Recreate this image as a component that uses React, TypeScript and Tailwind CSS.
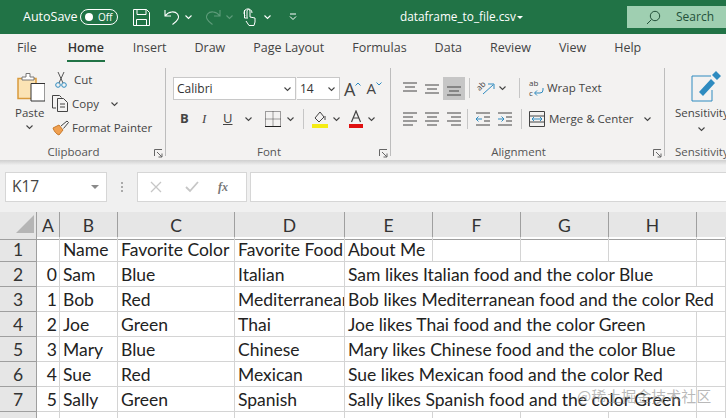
import React from "react";

const UI = "font-['Open_Sans','Noto_Sans',sans-serif]";
const SHEET = "font-['Lato','Noto_Sans',sans-serif]";

function Chev({ c = "#444", className = "" }: { c?: string; className?: string }) {
  return (
    <svg width="9" height="6" viewBox="0 0 9 6" className={`shrink-0 ${className}`}>
      <path d="M1.5 1.5 4.5 4.5 7.5 1.5" fill="none" stroke={c} strokeWidth="1.1" />
    </svg>
  );
}

function Launcher() {
  return (
    <svg width="9" height="9" viewBox="0 0 9 9" className="shrink-0">
      <path d="M.5 7V.5H8M3 3l5 5M8 4.500V8H4.500" fill="none" stroke="#666" strokeWidth="1" />
    </svg>
  );
}

function Lines({ w, y, x = [] as number[] }: { w: number[]; y: number[]; x?: number[] }) {
  return (
    <svg width="16" height="16" viewBox="0 0 16 16" className="shrink-0">
      {y.map((yy, i) => (
        <path key={i} d={`M${x[i] ?? 1} ${yy}h${w[i]}`} stroke="#444" strokeWidth="1" />
      ))}
    </svg>
  );
}

function TitleBar() {
  return (
    <div className={`h-[34px] bg-[#217346] text-white flex items-center pl-[23px] text-[12.5px] ${UI}`}>
      <span className="w-[57px]">AutoSave</span>
      <div className="w-[38px] h-[16px] rounded-full border border-white flex items-center pl-[4px] gap-[5px] text-[10px]">
        <span className="w-[8px] h-[8px] rounded-full bg-white" />
        Off
      </div>
      <svg width="17" height="17" viewBox="0 0 17 17" className="ml-[15px]">
        <path d="M.5.5h13l3 3v13H.5zM4 .5v5h9v-5M3.500 16.500v-6h10v6" fill="none" stroke="#fff" />
      </svg>
      <svg width="16" height="17" viewBox="0 0 16 17" className="ml-[14px]">
        <path d="M1 1v6h6M1.500 6.500C5 2 11 2 13.500 5c2.500 3.500 0 7-5 10.500" fill="none" stroke="#fff" strokeWidth="1.1" />
      </svg>
      <Chev c="#fff" className="ml-[4px]" />
      <svg width="16" height="17" viewBox="0 0 16 17" className="ml-[12px]">
        <path d="M15 1v6H9M14.500 6.500C11 2 5 2 2.500 5c-2.500 3.500 0 7 5 10.500" fill="none" stroke="#5f9c7b" strokeWidth="1.1" />
      </svg>
      <Chev c="#5f9c7b" className="ml-[4px]" />
      <svg width="14" height="18" viewBox="0 0 14 18" className="ml-[9px]">
        <path d="M4 9.500V3a1.500 1.500 0 0 1 3 0v6l5 1v4l-1 3.500H6L3 13M2 7.500a4 4 0 1 1 7-2.500M5 10H1.500V2" fill="none" stroke="#fff" />
      </svg>
      <Chev c="#fff" className="ml-[6px]" />
      <svg width="8" height="8" viewBox="0 0 8 8" className="ml-[17px]">
        <path d="M1 1h6M1 3.500 4 6.500 7 3.500" fill="none" stroke="#fff" />
      </svg>
      <span className="ml-[103px] w-[111px] text-[11.8px] whitespace-nowrap">dataframe_to_file.csv</span>
      <span className="ml-[6px] border-x-[3px] border-t-[3px] border-x-transparent border-t-white" />
      <div className="ml-auto w-[99px] h-[22px] bg-[#9fcfb1] text-[#24513a] flex items-center pl-[19px] gap-[15px] text-[12px]">
        <svg width="15" height="15" viewBox="0 0 15 15">
          <circle cx="9" cy="6" r="4.700" fill="none" stroke="#24513a" />
          <path d="M5.500 9.500 1 14" stroke="#24513a" />
        </svg>
        Search
      </div>
    </div>
  );
}

function Tabs() {
  return (
    <div className={`h-[28px] flex items-center pl-[17px] gap-[28px] text-[12.5px] text-[#444] ${UI}`}>
      <span>File</span>
      <span className="ml-[2px] h-full flex flex-col items-center pt-[5px] font-semibold text-[#333]">
        Home
        <span className="w-[38px] h-[3px] bg-[#217346] mt-[2px]" />
      </span>
      <span>Insert</span>
      <span>Draw</span>
      <span>Page Layout</span>
      <span>Formulas</span>
      <span>Data</span>
      <span>Review</span>
      <span>View</span>
      <span>Help</span>
    </div>
  );
}

function Group({ width, label, children }: { width: number; label: string; children: React.ReactNode }) {
  return (
    <div className="h-[88px] mt-[6px] flex flex-col border-r border-[#bdbdbd] shrink-0" style={{ width }}>
      <div className="flex-1 min-h-0 flex">{children}</div>
      <div className="h-[9px] flex items-center relative text-[11.5px] text-[#555] pr-[18px]">
        <span className="flex-1 text-center">{label}</span>
        <span className="absolute right-[2px] top-[2px]"><Launcher /></span>
      </div>
    </div>
  );
}

function Clipboard() {
  return (
    <Group width={166} label="Clipboard">
      <div className="w-[52px] pl-[15px] flex flex-col items-start pt-[3px]">
        <svg width="30" height="32" viewBox="0 0 30 32">
          <path d="M3 7.500h18v20H3z" fill="#fbe3b4" stroke="#d99a3c" strokeWidth="1.500" />
          <path d="M11 6V2.500h4V6h4v3H7V6z" fill="#fff" stroke="#777" />
          <path d="M16 12.500h14v17.500H16z" fill="#fff" stroke="#333" />
        </svg>
        <span className="text-[11.500px] text-[#444] mt-[1px]">Paste</span>
        <Chev className="ml-[10px] mt-[3px]" />
      </div>
      <div className="flex flex-col gap-[5px] pt-[2px] text-[11.500px] text-[#444]">
        <div className="h-[19px] flex items-center gap-[7px] pl-[3px]">
          <svg width="12" height="17" viewBox="0 0 12 17">
            <path d="M3 1l5 11M9 1 4 12" stroke="#555" fill="none" />
            <circle cx="3" cy="14" r="2.300" fill="none" stroke="#2e8bc0" />
            <circle cx="9" cy="14" r="2.300" fill="none" stroke="#2e8bc0" />
          </svg>
          Cut
        </div>
        <div className="h-[19px] flex items-center gap-[3px]">
          <svg width="17" height="17" viewBox="0 0 17 17">
            <path d="M4 13H.5V.5h7l2 2M5.500 3.500h6l4 4v9h-10zM8 9h5M8 12h5" fill="none" stroke="#444" />
          </svg>
          Copy
          <Chev className="ml-[8px]" />
        </div>
        <div className="h-[19px] flex items-center gap-[3px] whitespace-nowrap">
          <svg width="17" height="16" viewBox="0 0 17 16">
            <path d="M1 8l6-3 4 5-4 5c-3-1-5-4-6-7z" fill="#f0a050" stroke="#c87a2c" />
            <path d="M9 6l6-5 1.500 1.500-5 6" fill="none" stroke="#444" />
          </svg>
          Format Painter
        </div>
      </div>
    </Group>
  );
}

function Font() {
  return (
    <Group width={225} label="Font">
      <div className="pl-[7px] pt-[9px]">
        <div className="flex items-center">
          <div className="w-[123px] h-[23px] bg-white border border-[#c8c8c8] flex items-center px-[3px] text-[12px] text-[#333]">
            <span className="flex-1">Calibri</span>
            <Chev />
          </div>
          <div className="w-[43px] h-[23px] bg-white border border-l-0 border-[#c8c8c8] flex items-center px-[3px] ml-[1px] text-[12px] text-[#333]">
            <span className="flex-1">14</span>
            <Chev />
          </div>
          <span className="ml-[4px] text-[18px] text-[#444] leading-none">A</span>
          <svg width="6" height="4" viewBox="0 0 6 4" className="mb-[10px]"><path d="M.5 3.500 3 1l2.500 2.500" fill="none" stroke="#2e8bc0" /></svg>
          <span className="ml-[5px] text-[15px] text-[#444] leading-none">A</span>
          <svg width="6" height="4" viewBox="0 0 6 4" className="mb-[10px]"><path d="M.5.500 3 3 5.500.500" fill="none" stroke="#2e8bc0" /></svg>
        </div>
        <div className="flex items-center mt-[8px] h-[22px] text-[#444]">
          <span className="ml-[7px] w-[22px] font-bold text-[13px]">B</span>
          <span className="w-[21px] italic text-[13px] font-['Liberation_Serif',serif]">I</span>
          <span className="w-[17px] underline text-[13px]">U</span>
          <Chev className="ml-[4px]" />
          <svg width="16" height="16" viewBox="0 0 16 16" className="ml-[12px]">
            <path d="M.5.500h15v15H.5zM8 .5v15M.5 8h15" fill="none" stroke="#444" strokeDasharray="1 1" />
            <path d="M0 15.500h16" stroke="#222" />
          </svg>
          <Chev className="ml-[5px]" />
          <span className="ml-[8px] w-px h-[20px] bg-[#c6c6c6]" />
          <svg width="16" height="18" viewBox="0 0 16 18" className="ml-[8px]">
            <path d="M3 8l5-6 4 5-5 5zM13 6v4" fill="none" stroke="#444" />
            <path d="M0 14h16v4H0z" fill="#f5ec14" />
          </svg>
          <Chev className="ml-[4px]" />
          <svg width="14" height="18" viewBox="0 0 14 18" className="ml-[8px]">
            <path d="M2.500 12 7 1l4.500 11M4 8h6" fill="none" stroke="#444" strokeWidth="1.200" />
            <path d="M0 14h14v4H0z" fill="#e01010" />
          </svg>
          <Chev className="ml-[4px]" />
        </div>
      </div>
    </Group>
  );
}

function Alignment() {
  return (
    <Group width={274} label="Alignment">
      <div className="pl-[11px] pt-[8px] flex-1 text-[11.500px] text-[#444]">
        <div className="flex items-center h-[24px]">
          <Lines w={[14, 10, 14]} y={[3, 7, 11]} x={[1, 3, 1]} />
          <span className="w-[6px]" />
          <Lines w={[14, 10, 14]} y={[5, 9, 13]} x={[1, 3, 1]} />
          <span className="ml-[3px] w-[22px] h-[23px] bg-[#c6c6c6] flex items-center justify-center"><Lines w={[14, 10, 14]} y={[7, 11, 15]} x={[1, 3, 1]} /></span>
          <span className="ml-[4px] w-px h-[20px] bg-[#c6c6c6]" />
          <svg width="18" height="18" viewBox="0 0 18 18" className="ml-[7px] overflow-visible">
            <path d="M6 15 16 6M11 5h6v5" fill="none" stroke="#2e8bc0" />
            <text x="0" y="10" fontSize="8" fill="#444" transform="rotate(-45 4 8)">ab</text>
          </svg>
          <Chev className="ml-[3px]" />
          <span className="ml-[12px] w-px h-[20px] bg-[#c6c6c6]" />
          <svg width="15" height="18" viewBox="0 0 15 18" className="ml-[9px] overflow-visible">
            <text x="0" y="7" fontSize="8" fill="#444">ab</text>
            <text x="0" y="17" fontSize="8" fill="#444">c</text>
            <path d="M14 9v2a3 3 0 0 1-3 3H6M8 11.500 5.500 14 8 16.500" fill="none" stroke="#2e8bc0" />
          </svg>
          <span className="ml-[3px]">Wrap Text</span>
        </div>
        <div className="flex items-center h-[24px] mt-[7px]">
          <Lines w={[14, 10, 14, 10]} y={[2, 6, 10, 14]} />
          <span className="w-[6px]" />
          <Lines w={[14, 10, 14, 10]} y={[2, 6, 10, 14]} x={[1, 3, 1, 3]} />
          <span className="w-[6px]" />
          <Lines w={[14, 10, 14, 10]} y={[2, 6, 10, 14]} x={[1, 5, 1, 5]} />
          <span className="ml-[5px] w-px h-[20px] bg-[#c6c6c6]" />
          <svg width="16" height="16" viewBox="0 0 16 16" className="ml-[7px]">
            <path d="M1 2h14M1 14h14M9 6h6M9 10h6" stroke="#444" />
            <path d="M7 8H1M3.500 5.500 1 8l2.500 2.500" fill="none" stroke="#2e8bc0" />
          </svg>
          <svg width="16" height="16" viewBox="0 0 16 16" className="ml-[6px]">
            <path d="M1 2h14M1 14h14M9 6h6M9 10h6" stroke="#444" />
            <path d="M1 8h6M4.500 5.500 7 8l-2.500 2.500" fill="none" stroke="#2e8bc0" />
          </svg>
          <span className="ml-[8px] w-px h-[20px] bg-[#c6c6c6]" />
          <svg width="16" height="16" viewBox="0 0 16 16" className="ml-[7px]">
            <path d="M.5.500h15v15H.5zM.5 5h15M.5 11h15" fill="none" stroke="#444" />
            <path d="M3 8h10M5 6l-2 2 2 2M11 6l2 2-2 2" fill="none" stroke="#2e8bc0" />
          </svg>
          <span className="ml-[4px]">Merge &amp; Center</span>
          <Chev className="ml-[9px]" />
        </div>
      </div>
    </Group>
  );
}

function Sensitivity() {
  return (
    <div className="flex-1 min-w-0 h-[98px] flex flex-col items-start pl-[10px] overflow-hidden text-[#444] text-[11.500px] whitespace-nowrap">
      <svg width="30" height="32" viewBox="0 0 30 32" className="ml-[16px] mt-[8px] shrink-0">
        <path d="M1 6h19M1 6v25h20V20" fill="none" stroke="#2e8bc0" />
        <path d="M8 22 20 9l4 4-12 13zM21 5l4-4 5 5-4 4z" fill="#2e8bc0" />
      </svg>
      <span className="mt-[3px] leading-[16px]">Sensitivity</span>
      <Chev className="ml-[22px] mt-[5px]" />
      <span className="mt-[12px] leading-[16px] text-[#555]">Sensitivity</span>
    </div>
  );
}

function Ribbon() {
  return (
    <div className={`h-[98px] flex bg-[#f3f2f1] ${UI}`}>
      <Clipboard />
      <Font />
      <Alignment />
      <Sensitivity />
    </div>
  );
}

function FormulaBar() {
  return (
    <div className={`h-[52px] pt-[12px] pl-[5px] flex items-start bg-[#eeeeee] bg-gradient-to-b from-[#cfcfcf] from-0% to-[#f0f0f0] to-[10%] ${UI}`}>
      <div className="w-[102px] h-[30px] bg-white border border-[#d6d6d6] flex items-center pl-[6px] pr-[7px] text-[15.500px] text-[#444]">
        <span className="flex-1">K17</span>
        <span className="border-x-[4px] border-t-[4px] border-x-transparent border-t-[#8a8a8a]" />
      </div>
      <div className="w-[30px] h-[30px] flex flex-col items-center justify-center gap-[2px]">
        <span className="w-[2px] h-[2px] bg-[#aaa]" />
        <span className="w-[2px] h-[2px] bg-[#aaa]" />
        <span className="w-[2px] h-[2px] bg-[#aaa]" />
      </div>
      <div className="w-[110px] h-[30px] bg-white border border-[#d6d6d6] flex items-center pl-[12px]">
        <svg width="12" height="12" viewBox="0 0 12 12"><path d="M1 1l10 10M11 1 1 11" stroke="#c6c6c6" strokeWidth="1.300" /></svg>
        <svg width="14" height="12" viewBox="0 0 14 12" className="ml-[23px]"><path d="M1 6l4 4 8-9" fill="none" stroke="#c6c6c6" strokeWidth="1.800" /></svg>
        <span className="ml-[19px] italic text-[12px] text-[#777] font-['Liberation_Serif',serif] font-bold">fx</span>
      </div>
      <div className="ml-[3px] flex-1 h-[30px] bg-white border-y border-l border-[#d6d6d6]" />
    </div>
  );
}

const gridCols = "grid-cols-[37px_23px_58px_117px_110px_88px_88px_88px_88px_29px]";

function Sheet() {
  const head = ["A", "B", "C", "D", "E", "F", "G", "H"];
  const rows: [string, string, string, string, string, string, number][] = [
    ["2", "0", "Sam", "Blue", "Italian", "Sam likes Italian food and the color Blue", 4],
    ["3", "1", "Bob", "Red", "Mediterranean", "Bob likes Mediterranean food and the color Red", 5],
    ["4", "2", "Joe", "Green", "Thai", "Joe likes Thai food and the color Green", 4],
    ["5", "3", "Mary", "Blue", "Chinese", "Mary likes Chinese food and the color Blue", 4],
    ["6", "4", "Sue", "Red", "Mexican", "Sue likes Mexican food and the color Red", 4],
    ["7", "5", "Sally", "Green", "Spanish", "Sally likes Spanish food and the color Green", 4],
  ];
  const cell = "h-[25px] border-r border-b border-[#d4d4d4] pl-[3px] overflow-hidden whitespace-nowrap leading-[26px]";
  const rowHead = "h-[25px] bg-[#e6e6e6] border-r border-b border-[#9f9f9f] text-center leading-[26px] text-[#333]";
  return (
    <div className={`relative bg-white text-[17.500px] text-[#222] ${SHEET}`}>
      <div className={`grid ${gridCols} bg-[#e6e6e6] h-[25px]`}>
        <div className="border-r border-b border-[#9f9f9f] relative">
          <svg width="18" height="18" viewBox="0 0 18 18" className="absolute left-[16px] top-[3px]">
            <path d="M18 0v18H0z" fill="#b5b5b5" />
          </svg>
        </div>
        {head.map((h) => (
          <div key={h} className="border-r border-b border-[#9f9f9f] text-center leading-[27px] text-[#333]">{h}</div>
        ))}
        <div className="border-b border-[#9f9f9f]" />
      </div>
      <div className={`grid ${gridCols}`}>
        <div className={rowHead}>1</div>
        <div className={cell} />
        <div className={cell}>Name</div>
        <div className={cell}>Favorite Color</div>
        <div className={cell}>Favorite Food</div>
        <div className={cell}>About Me</div>
        <div className={cell} />
        <div className={cell} />
        <div className={cell} />
        <div className={cell} />
        {rows.map((r) => (
          <React.Fragment key={r[0]}>
            <div className={rowHead}>{r[0]}</div>
            <div className={`${cell} text-right pr-[2px]`}>{r[1]}</div>
            <div className={cell}>{r[2]}</div>
            <div className={cell}>{r[3]}</div>
            <div className={cell}>{r[4]}</div>
            {r[6] === 4 ? (
              <>
                <div className={`${cell} col-span-4`}>{r[5]}</div>
                <div className={cell} />
              </>
            ) : (
              <div className={`${cell} col-span-5`}>{r[5]}</div>
            )}
          </React.Fragment>
        ))}
        <div className="h-[25px] bg-[#e6e6e6] border-r border-[#9f9f9f]" />
        {Array.from({ length: 9 }).map((_, i) => (
          <div key={i} className={cell} />
        ))}
      </div>
      <span className="absolute left-[577px] top-[176px] text-[15px] leading-none text-[#8a8a8a]/60 whitespace-nowrap font-['Noto_Sans_CJK_SC','Noto_Sans',sans-serif]">@稀土掘金技术社区</span>
    </div>
  );
}

export default function App() {
  return (
    <div className="w-[726px] h-[418px] overflow-hidden bg-[#f3f2f1]">
      <TitleBar />
      <Tabs />
      <Ribbon />
      <FormulaBar />
      <Sheet />
    </div>
  );
}
